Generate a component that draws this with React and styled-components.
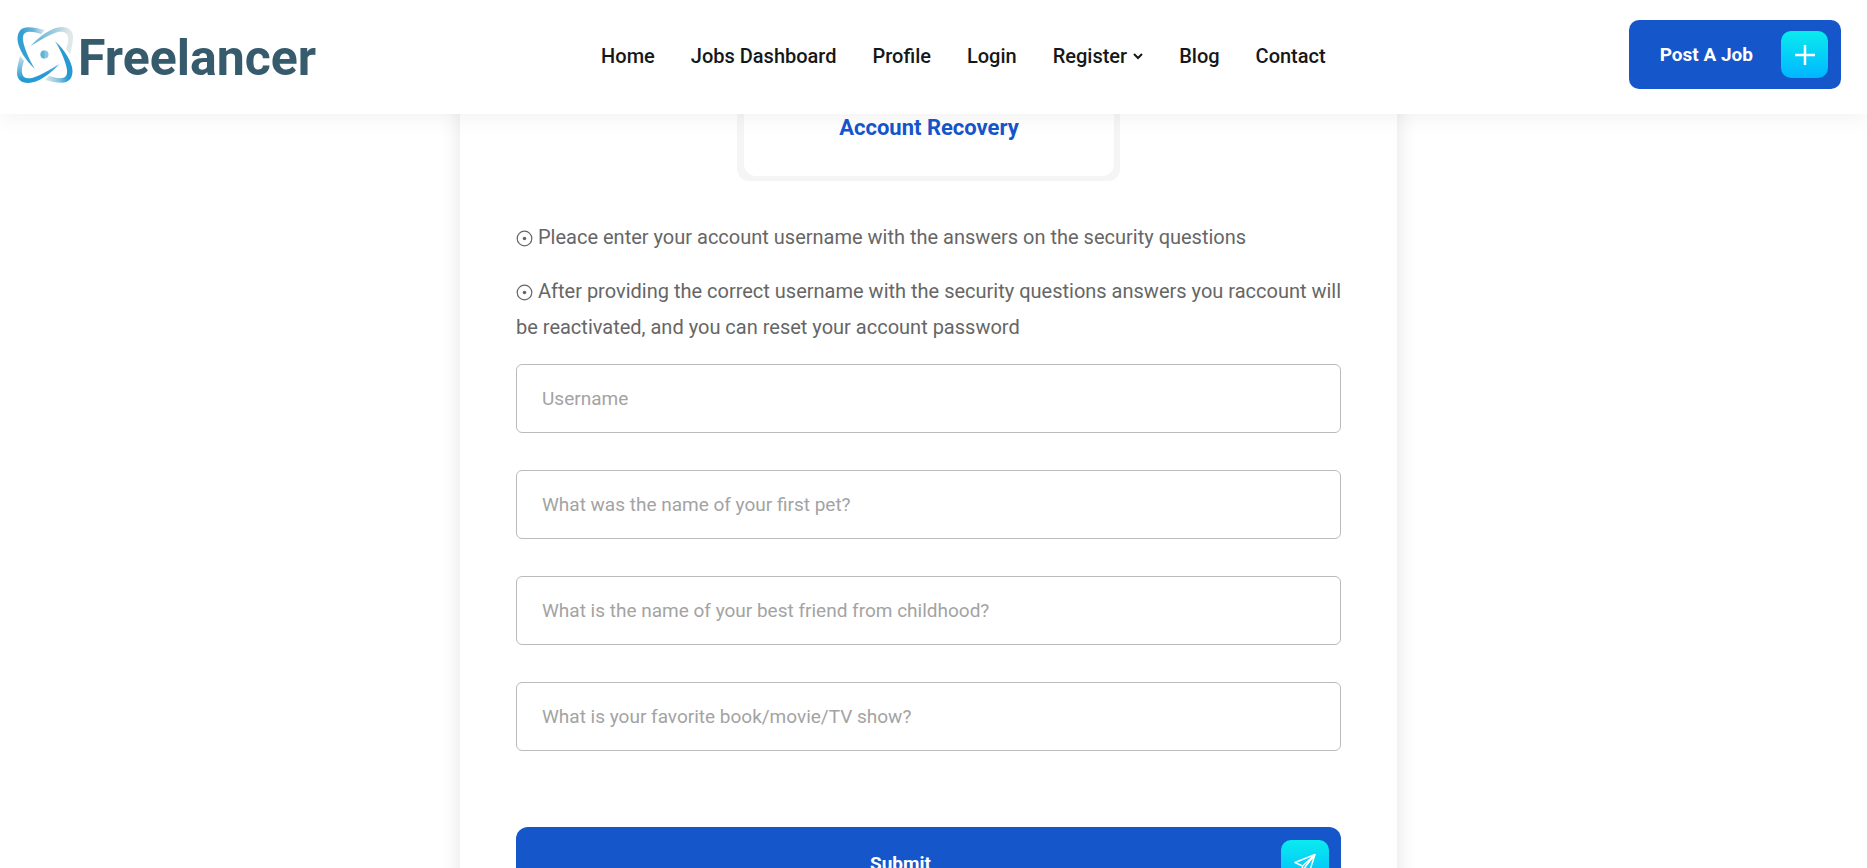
import React from "react";
import styled, { createGlobalStyle } from "styled-components";

const blue = "#1656cb";

const GlobalStyle = createGlobalStyle`
  * { box-sizing: border-box; }
  body {
    margin: 0;
    background: #fff;
    color: #666;
    font-family: Roboto, "Liberation Sans", sans-serif;
  }
`;

const Page = styled.div`
  height: 100vh;
  display: flex;
  flex-direction: column;
  overflow: hidden;
`;

const Header = styled.header`
  position: relative;
  z-index: 2;
  flex: none;
  display: flex;
  align-items: flex-start;
  justify-content: space-between;
  padding: 20px 26px 22px 16px;
  background: #fff;
  box-shadow: 0 5px 20px rgba(0, 0, 0, 0.05);
`;

const Brand = styled.a`
  display: flex;
  align-items: flex-start;
  gap: 4px;
  padding-top: 6px;
  color: #365b6d;
  font-size: 50px;
  line-height: 64px;
  font-weight: 700;
  text-decoration: none;
`;

const Nav = styled.nav`
  display: flex;
  align-items: center;
  gap: 36px;
  height: 72px;
  margin-right: 18px;
`;

const NavLink = styled.a`
  display: flex;
  align-items: center;
  gap: 6px;
  color: #161719;
  font-size: 20px;
  line-height: 24px;
  font-weight: 500;
  text-decoration: none;
`;

const Action = styled.button`
  display: flex;
  align-items: center;
  gap: ${(p) => (p.$wide ? "0" : "28px")};
  width: ${(p) => (p.$wide ? "100%" : "auto")};
  padding: ${(p) => (p.$wide ? "13px 12px 13px 4px" : "11px 13px 11px 31px")};
  border: 0;
  border-radius: ${(p) => (p.$wide ? "12px" : "10px")};
  background: ${blue};
  color: #fff;
  font-family: inherit;
  font-size: 19px;
  line-height: 24px;
  font-weight: 700;
  cursor: pointer;
`;

const ActionLabel = styled.span`
  flex: 1;
  text-align: center;
  white-space: nowrap;
`;

const ActionIcon = styled.span`
  display: grid;
  place-items: center;
  width: ${(p) => p.$size}px;
  height: ${(p) => p.$size}px;
  border-radius: 10px;
  background: linear-gradient(#0aebee, #00b6ff);
`;

const Main = styled.main`
  flex: 1;
  min-height: 0;
  padding-right: 10px;
  overflow: hidden;
`;

const Card = styled.section`
  width: 100%;
  max-width: 937px;
  margin: -40px auto 0;
  padding: 40px 56px 56px;
  background: #fff;
  box-shadow: 0 0 20px rgba(0, 0, 0, 0.11);
`;

const TitleFrame = styled.div`
  width: 383px;
  max-width: 100%;
  margin: 0 auto;
  padding: 0 6px 5px 7px;
  border-radius: 0 0 12px 12px;
  background: #f5f5f5;
`;

const Title = styled.h1`
  margin: 0;
  padding-bottom: 34px;
  border-radius: 0 0 12px 12px;
  background: #fff;
  color: ${blue};
  font-size: 22px;
  line-height: 28px;
  font-weight: 700;
  text-align: center;
`;

const Notes = styled.div`
  display: flex;
  flex-direction: column;
  gap: 18px;
  margin-right: -4px;
  padding: 38px 0 19px;
`;

const Note = styled.p`
  margin: 0;
  font-size: 20px;
  line-height: 36px;

  svg {
    margin-right: 5px;
    vertical-align: -3px;
  }
`;

const Form = styled.form`
  display: flex;
  flex-direction: column;
  gap: 37px;
`;

const Field = styled.input`
  width: 100%;
  height: 69px;
  padding: 0 25px;
  border: 1px solid #bbb;
  border-radius: 6px;
  background: #fff;
  color: #333;
  font-family: inherit;
  font-size: 19px;

  &::placeholder {
    color: #a3a3a3;
    opacity: 1;
  }
`;

const SubmitRow = styled.div`
  padding-top: 39px;
`;

const links = ["Home", "Jobs Dashboard", "Profile", "Login", "Register", "Blog", "Contact"];

const questions = [
  "Username",
  "What was the name of your first pet?",
  "What is the name of your best friend from childhood?",
  "What is your favorite book/movie/TV show?",
];

const notes = [
  "Pleace enter your account username with the answers on the security questions",
  "After providing the correct username with the security questions answers you raccount will be reactivated, and you can reset your account password",
];

const upright = "M19 43C10 35 1.5 22 1.5 13C1.5 5 6 1.3 12 1.3C18 1.3 23 2.5 29 4L25 8C20 6.5 15 5.5 12 6C8 6.5 6.5 9 7 14C8 22 13 33 19 43z";
const slanted = "M14.6 20C24 10 36 1 46 1C53 1 57 5 57 11C57 17 55.5 22 54 28L50 23C52 18 52.5 14 52 11C51 6 47 5 42 6C34 8 25 14 14.6 20z";

function Atom() {
  return (
    <svg width="58" height="58" viewBox="0 0 58 58" aria-hidden="true">
      <defs>
        <linearGradient id="upright" x1="0" y1="0.3" x2="1" y2="0">
          <stop offset="0.2" stopColor="#33a0d3" />
          <stop offset="0.6" stopColor="#6bb7dc" />
          <stop offset="1" stopColor="#e6eff0" />
        </linearGradient>
        <linearGradient id="slanted" x1="0" y1="0" x2="1" y2="0.2">
          <stop offset="0" stopColor="#48a8d4" />
          <stop offset="0.55" stopColor="#9acbdc" />
          <stop offset="0.9" stopColor="#dfe8e8" />
        </linearGradient>
        <linearGradient id="lower" x1="0.7" y1="0" x2="1" y2="1">
          <stop offset="0.2" stopColor="#249bd5" />
          <stop offset="1" stopColor="#cfe3ea" />
        </linearGradient>
        <linearGradient id="right" x1="0" y1="0.3" x2="1" y2="0">
          <stop offset="0.2" stopColor="#2499d4" />
          <stop offset="0.5" stopColor="#7fc0de" />
          <stop offset="1" stopColor="#e6ecec" />
        </linearGradient>
      </defs>
      <path d={upright} fill="url(#upright)" />
      <path d={slanted} fill="url(#slanted)" />
      <path d={upright} fill="url(#right)" transform="rotate(180 29 29)" />
      <path d={slanted} fill="url(#lower)" transform="rotate(180 29 29)" />
      <circle cx="28.5" cy="28.5" r="4" fill="#86c6e2" />
      <path d="M28.5 24.5a4 4 0 0 0 0 8z" fill="#5fb4da" />
    </svg>
  );
}

function Chevron() {
  return (
    <svg width="10" height="7" viewBox="0 0 10 7" fill="none" stroke="currentColor" strokeWidth="2" aria-hidden="true">
      <path d="M1 1l4 4 4-4" />
    </svg>
  );
}

function Plus() {
  return (
    <svg width="22" height="22" viewBox="0 0 22 22" stroke="#fff" strokeWidth="2.5" aria-hidden="true">
      <path d="M11 1v20M1 11h20" />
    </svg>
  );
}

function Plane() {
  return (
    <svg width="22" height="22" viewBox="0 0 22 22" fill="none" stroke="#fff" strokeWidth="1.5" strokeLinejoin="round" aria-hidden="true">
      <path d="M1 9.500L21 1.500L15 20L11 14L8.500 19V13zM8.500 13L21 1.500L11 14" />
    </svg>
  );
}

function Dot() {
  return (
    <svg width="17" height="17" viewBox="0 0 17 17" aria-hidden="true">
      <circle cx="8.5" cy="8.5" r="7.3" fill="none" stroke="#666" strokeWidth="1.2" />
      <circle cx="8.5" cy="8.5" r="1.8" fill="#666" />
    </svg>
  );
}

export default function App() {
  return (
    <Page>
      <GlobalStyle />
      <Header>
        <Brand href="#"><Atom />Freelancer</Brand>
        <Nav>
          {links.map((name) => (
            <NavLink key={name} href="#">
              {name}
              {name === "Register" && <Chevron />}
            </NavLink>
          ))}
        </Nav>
        <Action type="button">
          <ActionLabel>Post A Job</ActionLabel>
          <ActionIcon $size={47}><Plus /></ActionIcon>
        </Action>
      </Header>
      <Main>
        <Card>
          <TitleFrame><Title>Account Recovery</Title></TitleFrame>
          <Notes>
            {notes.map((text) => (
              <Note key={text}><Dot />{text}</Note>
            ))}
          </Notes>
          <Form onSubmit={(e) => e.preventDefault()}>
            {questions.map((text) => (
              <Field key={text} type="text" placeholder={text} aria-label={text} />
            ))}
            <SubmitRow>
              <Action $wide type="submit">
                <ActionLabel>Submit</ActionLabel>
                <ActionIcon $size={48}><Plane /></ActionIcon>
              </Action>
            </SubmitRow>
          </Form>
        </Card>
      </Main>
    </Page>
  );
}
